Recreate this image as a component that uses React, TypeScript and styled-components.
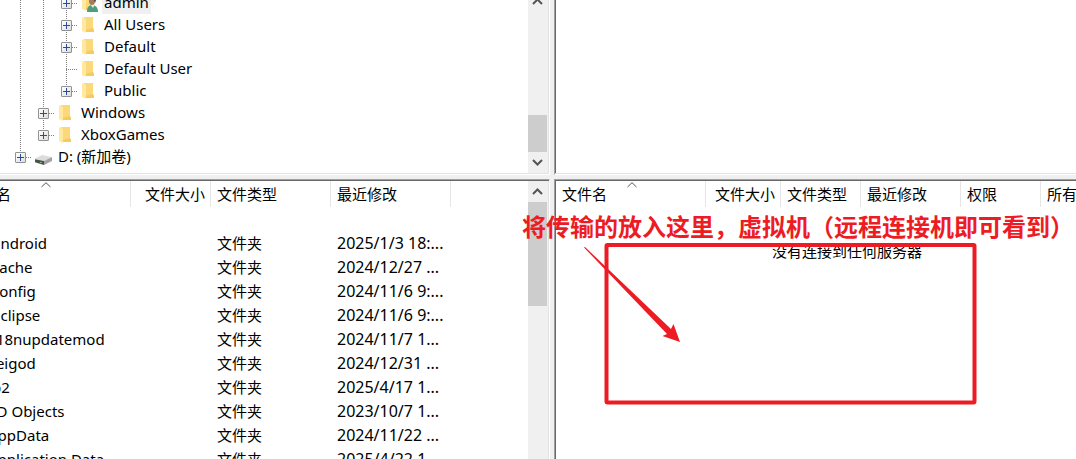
import React from "react";
import styled, { createGlobalStyle, css } from "styled-components";

const GlobalStyle = createGlobalStyle`
  * { box-sizing: border-box; }
  body {
    margin: 0;
    background: #f0f0f0;
    color: #000;
    font-family: "Noto Sans", "Noto Sans CJK SC", sans-serif;
    font-size: 15px;
    line-height: 22px;
  }
`;

const RED = "#ed1c24";

const Window = styled.main`
  position: relative;
  height: 100vh;
  display: grid;
  grid-template-columns: 550px minmax(0, 1fr);
  grid-template-rows: 175px minmax(0, 1fr);
  gap: 4px;
  overflow: hidden;
`;

/* Each pane has a sunken two-tone edge on the sides that meet a splitter. */
const Pane = styled.section<{ $lower?: boolean }>`
  display: flex;
  min-width: 0;
  overflow: hidden;
  background: #fff;
  border: 0 solid;
  border-color: #a0a0a0 #fff #fff #a0a0a0;
  ${(p) => (p.$lower ? css`border-top-width: 1px;` : css`border-bottom-width: 1px;`)}
`;

const edgeY = (lower?: boolean) =>
  lower ? "inset 0 1px #696969" : "inset 0 -1px #e3e3e3";

const LeftPane = styled(Pane)`
  border-right-width: 1px;
  padding: ${(p) => (p.$lower ? "1px 1px 0 0" : "0 1px 1px 0")};
  box-shadow: ${(p) => edgeY(p.$lower)}, inset -1px 0 #e3e3e3;
`;

const RightPane = styled(Pane)`
  border-left-width: 1px;
  padding: ${(p) => (p.$lower ? "1px 0 0 1px" : "0 0 1px 1px")};
  box-shadow: ${(p) => edgeY(p.$lower)}, inset 1px 0 #696969;
`;

/* Tree */

const Tree = styled.ul`
  flex: 1;
  min-width: 0;
  margin: 0;
  padding: 0 0 5px 9px;
  list-style: none;
  display: flex;
  flex-direction: column;
  justify-content: flex-end;
`;

const TreeRow = styled.li`
  flex: none;
  display: flex;
  align-items: center;
  height: 22px;
`;

const dotsDown = "repeating-linear-gradient(#808080 0 1px, transparent 1px 2px)";
const dotsAcross = "repeating-linear-gradient(90deg, #808080 0 1px, transparent 1px 2px)";

const Guide = styled.span<{ $end?: boolean }>`
  flex: none;
  width: 23px;
  height: 22px;
  background: ${dotsDown} 11px 0 / 1px ${(p) => (p.$end ? "11px" : "22px")} no-repeat;
`;

const Branch = styled(Guide)`
  display: flex;
  align-items: center;
  padding-left: 6px;
  background: ${dotsDown} 11px 0 / 1px ${(p) => (p.$end ? "11px" : "22px")} no-repeat,
    ${dotsAcross} 11px 11px / 12px 1px no-repeat;
`;

const Toggle = styled.button`
  display: block;
  width: 11px;
  height: 11px;
  padding: 0;
  border: 1px solid #919191;
  border-radius: 1px;
  background: linear-gradient(#2c4a9a, #2c4a9a) 1px 4px / 7px 1px no-repeat,
    linear-gradient(#2c4a9a, #2c4a9a) 4px 1px / 1px 7px no-repeat,
    linear-gradient(135deg, #fff, #dedede);
`;

const TreeIcon = styled.svg`
  flex: none;
  width: 20px;
  height: 18px;
  margin: 0 1px 0 3px;
`;

const TreeLabel = styled.span<{ $selected?: boolean }>`
  padding: 0 2px;
  height: 22px;
  line-height: 20px;
  white-space: nowrap;
  background: ${(p) => (p.$selected ? "#f0f0f0" : "transparent")};
`;

/* Scroll bar */

const ScrollTrack = styled.div`
  flex: none;
  display: flex;
  flex-direction: column;
  width: 20px;
  padding-right: 1px;
  background: #f0f0f0;
`;

const ScrollButton = styled.button`
  flex: none;
  height: 21px;
  padding: 0;
  border: 0;
  background: #f0f0f0;
  display: flex;
  align-items: center;
  justify-content: center;
`;

const Thumb = styled.div<{ $size: number }>`
  flex: none;
  height: ${(p) => p.$size}px;
  background: #cdcdcd;
`;

const TopScroll = styled(ScrollTrack)`
  justify-content: flex-end;
`;

const TrackGap = styled.div`
  flex: none;
  height: 103px;
`;

/* File lists */

const ListArea = styled.div`
  flex: 1;
  min-width: 0;
  overflow: hidden;
`;

const FileTable = styled.table<{ $width: number; $scrolled?: boolean }>`
  width: ${(p) => p.$width}px;
  margin-left: ${(p) => (p.$scrolled ? "-40px" : "0")};
  table-layout: fixed;
  border-collapse: separate;
  border-spacing: 0;
`;

const HeadCell = styled.th<{ $right?: boolean }>`
  position: relative;
  height: 26px;
  padding: 1px 5px 1px 6px;
  border-right: 1px solid #e5e5e5;
  font-weight: 400;
  text-align: ${(p) => (p.$right ? "right" : "left")};
  white-space: nowrap;
`;

const SortMark = styled.svg`
  position: absolute;
  top: 1px;
  left: 50%;
  margin-left: -4px;
`;

const Cell = styled.td`
  height: 24px;
  padding: 0 0 0 6px;
  white-space: nowrap;
`;

const DateCell = styled(Cell)`
  font-size: 16px;
`;

const FileName = styled.span`
  display: flex;
  gap: 6px;
`;

const EmptyNote = styled.td`
  padding: 32px 0 0;
  line-height: 24px;
  text-align: center;
`;

/* Marks drawn over the window */

const Caption = styled.p`
  position: absolute;
  left: 522px;
  top: 208px;
  margin: 0;
  color: ${RED};
  font: 700 24px/36px "Noto Sans CJK SC", sans-serif;
  white-space: nowrap;
`;

const Marks = styled.svg`
  position: absolute;
  left: 580px;
  top: 240px;
  pointer-events: none;
`;

function Folder({ user }: { user?: boolean }) {
  return (
    <TreeIcon viewBox="0 0 20 18" aria-hidden="true">
      <path d="M3 1h9v12l1 1v2H5z" fill="#fbd879" />
      <path d="M12 12l1 2v2h-8l-1-2z" fill="#f5cb5d" />
      <path d="M1 1l4 2v14l-4-2z" fill="#ffe8a2" />
      {user && (
        <>
          <path d="M6 18c0-5 2-7 5-7 4 0 6 3 6 7z" fill="#4e9e7e" />
          <path d="M9 10l3 4 2-4z" fill="#e9efe8" />
          <ellipse cx="11" cy="7" rx="3" ry="4" fill="#a77b5c" />
          <path d="M8 5c0-5 7-5 7 1l-1 3-1-3z" fill="#4b4038" />
        </>
      )}
    </TreeIcon>
  );
}

function Drive() {
  return (
    <TreeIcon viewBox="2 -1 20 18" aria-hidden="true">
      <path d="M1 10l8-4 10 2-8 4z" fill="#dcdcdc" />
      <path d="M1 10l10 2v4L1 13z" fill="#4c4f4c" />
      <path d="M11 12l8-4v4l-8 4z" fill="#a3a3a3" />
      <path d="M7 13h2v1H7z" fill="#5ad06a" />
    </TreeIcon>
  );
}

function Chevron({ down }: { down?: boolean }) {
  return (
    <svg width="11" height="8" viewBox="0 0 11 8" aria-hidden="true">
      <path
        d={down ? "M1 1l4.5 4.5L10 1" : "M1 6L5.5 1.5 10 6"}
        fill="none"
        stroke="#555"
        strokeWidth="2"
      />
    </svg>
  );
}

type Node = {
  name: string;
  depth: number;
  leaf?: boolean;
  last?: boolean;
  icon?: "user" | "drive";
};

const nodes: Node[] = [
  { name: "admin", depth: 2, icon: "user" },
  { name: "All Users", depth: 2 },
  { name: "Default", depth: 2 },
  { name: "Default User", depth: 2, leaf: true },
  { name: "Public", depth: 2, last: true },
  { name: "Windows", depth: 1 },
  { name: "XboxGames", depth: 1, last: true },
  { name: "D: (新加卷)", depth: 0, last: true, icon: "drive" },
];

const files = [
  [".android", "2025/1/3 18:..."],
  [".cache", "2024/12/27 ..."],
  [".config", "2024/11/6 9:..."],
  [".eclipse", "2024/11/6 9:..."],
  [".i18nupdatemod", "2024/11/7 1..."],
  [".leigod", "2024/12/31 ..."],
  [".p2", "2025/4/17 1..."],
  ["3D Objects", "2023/10/7 1..."],
  ["AppData", "2024/11/22 ..."],
  ["Application Data", "2025/4/22 1..."],
];

type Column = { label: string; width: number; right?: boolean; sorted?: boolean };

const localColumns: Column[] = [
  { label: "文件名", width: 171, sorted: true },
  { label: "文件大小", width: 80, right: true },
  { label: "文件类型", width: 120 },
  { label: "最近修改", width: 120 },
];

const remoteColumns: Column[] = [
  { label: "文件名", width: 150, sorted: true },
  { label: "文件大小", width: 75, right: true },
  { label: "文件类型", width: 80 },
  { label: "最近修改", width: 100 },
  { label: "权限", width: 80 },
  { label: "所有者/组", width: 97 },
];

function Columns({ columns }: { columns: Column[] }) {
  return (
    <>
      <colgroup>
        {columns.map((c) => (
          <col key={c.label} width={c.width} />
        ))}
      </colgroup>
      <thead>
        <tr>
          {columns.map((c) => (
            <HeadCell key={c.label} $right={c.right} scope="col">
              {c.label}
              {c.sorted && (
                <SortMark width="10" height="6" viewBox="0 0 10 6" aria-hidden="true">
                  <path d="M.5 5L5 .7 9.5 5" fill="none" stroke="#555" />
                </SortMark>
              )}
            </HeadCell>
          ))}
        </tr>
      </thead>
    </>
  );
}

export default function App() {
  return (
    <Window>
      <GlobalStyle />
      <LeftPane>
        <Tree>
          {nodes.map((n) => (
            <TreeRow key={n.name}>
              {Array.from({ length: n.depth }, (_, i) => (
                <Guide key={i} />
              ))}
              <Branch $end={n.last}>
                {!n.leaf && <Toggle type="button" aria-label={`Expand ${n.name}`} />}
              </Branch>
              {n.icon === "drive" ? <Drive /> : <Folder user={n.icon === "user"} />}
              <TreeLabel $selected={n.icon === "user"}>{n.name}</TreeLabel>
            </TreeRow>
          ))}
        </Tree>
        <TopScroll>
          <ScrollButton type="button" aria-label="Scroll up"><Chevron /></ScrollButton>
          <TrackGap />
          <Thumb $size={37} />
          <ScrollButton type="button" aria-label="Scroll down"><Chevron down /></ScrollButton>
        </TopScroll>
      </LeftPane>

      <RightPane />

      <LeftPane $lower>
        <ListArea>
          <FileTable $width={491} $scrolled>
            <Columns columns={localColumns} />
            <tbody>
              <tr><Cell colSpan={4} /></tr>
              {files.map(([name, date]) => (
                <tr key={name}>
                  <Cell>
                    <FileName>
                      <svg width="16" height="22" viewBox="0 0 16 22" aria-hidden="true">
                        <path d="M1 4h6l2 2h6v12H1z" fill="#fbd879" />
                      </svg>
                      {name}
                    </FileName>
                  </Cell>
                  <Cell />
                  <Cell>文件夹</Cell>
                  <DateCell>{date}</DateCell>
                </tr>
              ))}
            </tbody>
          </FileTable>
        </ListArea>
        <ScrollTrack>
          <ScrollButton type="button" aria-label="Scroll up"><Chevron /></ScrollButton>
          <Thumb $size={104} />
        </ScrollTrack>
      </LeftPane>

      <RightPane $lower>
        <ListArea>
          <FileTable $width={582}>
            <Columns columns={remoteColumns} />
            <tbody>
              <tr><EmptyNote colSpan={6}>没有连接到任何服务器</EmptyNote></tr>
            </tbody>
          </FileTable>
        </ListArea>
      </RightPane>

      <Marks width="400" height="168" viewBox="0 0 400 168" aria-hidden="true">
        <rect x="26.5" y="5" width="368" height="157.5" rx="1" fill="none" stroke={RED} strokeWidth="4" />
        <path d="M4 7.5L5 7l86 82 2.5-5L100 102l-17.5-6 4.5-2z" fill={RED} />
      </Marks>
      <Caption>将传输的放入这里，虚拟机（远程连接机即可看到）</Caption>
    </Window>
  );
}
